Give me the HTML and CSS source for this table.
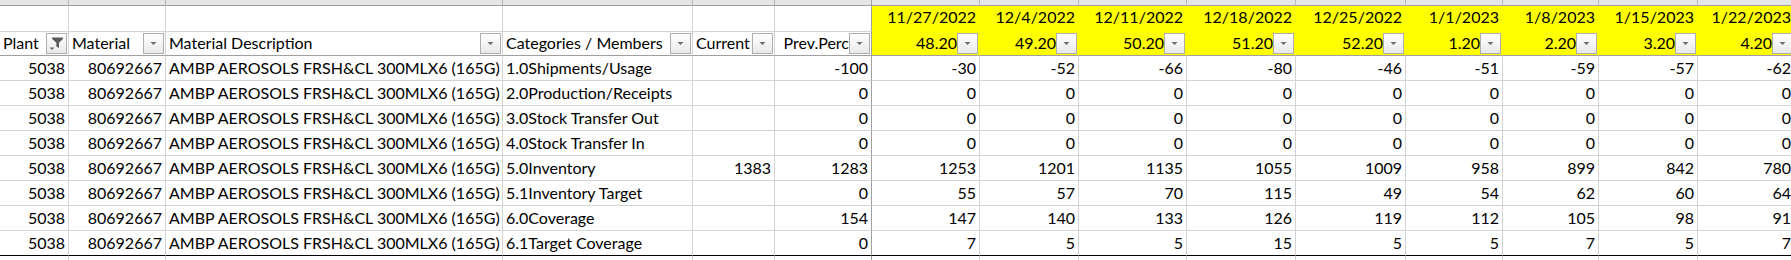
FILE: index.html
```html
<!DOCTYPE html>
<html>
<head>
<meta charset="utf-8">
<link rel="stylesheet" href="styles.css">
</head>
<body>
<div class="sheet" id="sheet"></div>
<script src="app.js"></script>
</body>
</html>
```
FILE: styles.css
```css
* { box-sizing: border-box; }
html, body { margin: 0; padding: 0; background: #fff; overflow: hidden; height: 260px; }
.sheet {
  display: grid;
  grid-template-columns: 69px 97px 337px 190px 82px 97px 108px 99px 108px 109px 110px 97px 96px 99px 97px;
  grid-template-rows: 6px 26px 24px repeat(8, 25px) 4px;
  width: 1795px;
  font-family: Lato, "Open Sans", sans-serif;
  font-size: 16px;
  color: #000;
}
.c {
  border-right: 1px solid #d4d4d4;
  border-bottom: 1px solid #d4d4d4;
  display: flex;
  align-items: flex-end;
  overflow: hidden;
  white-space: nowrap;
  line-height: 1;
  min-width: 0;
}
.strip { background: #e6e6e6; border-bottom-color: #a0a0a0; border-right-color: #b8b8b8; }
.tail { border-bottom: 0; }
.r2 { padding-bottom: 6px; }
.d { padding-bottom: 4px; }
.txt { justify-content: flex-start; padding-left: 3px; }
.num { justify-content: flex-end; padding-right: 3px; }
.r3 { border-bottom-color: #a0a0a0; padding-right: 1px; overflow: visible; }
.fz { border-right-color: #a0a0a0; }
.y { background: #ffff00; border-right-color: #ffff00; }
.r2.y { border-bottom-color: #ffff00; justify-content: flex-end; padding-right: 3px; }
.last { border-bottom-color: #000; }
.label {
  flex: 1 1 auto;
  min-width: 0;
  overflow: hidden;
  line-height: 1.15;
  padding-bottom: 3px;
}
.label.right { text-align: right; }
.label.left { padding-left: 3px; }
.btn {
  flex: 0 0 21px;
  width: 21px;
  height: 21px;
  border: 1px solid #aeaeae;
  background: linear-gradient(to bottom, #ffffff, #e9e9e9);
  display: flex;
  align-items: center;
  justify-content: center;
  margin-bottom: 1px;
}
.btn svg { display: block; }
```
FILE: app.js
```js
const cols = 15;
const dates = ["11/27/2022","12/4/2022","12/11/2022","12/18/2022","12/25/2022","1/1/2023","1/8/2023","1/15/2023","1/22/2023"];
const weeks = ["48.20","49.20","50.20","51.20","52.20","1.20","2.20","3.20","4.20"];
const cats = ["1.0Shipments/Usage","2.0Production/Receipts","3.0Stock Transfer Out","4.0Stock Transfer In","5.0Inventory","5.1Inventory Target","6.0Coverage","6.1Target Coverage"];
const cur = ["","","","","1383","","",""];
const prev = ["-100","0","0","0","1283","0","154","0"];
const vals = [
  [-30,-52,-66,-80,-46,-51,-59,-57,-62],
  [0,0,0,0,0,0,0,0,0],
  [0,0,0,0,0,0,0,0,0],
  [0,0,0,0,0,0,0,0,0],
  [1253,1201,1135,1055,1009,958,899,842,780],
  [55,57,70,115,49,54,62,60,64],
  [147,140,133,126,119,112,105,98,91],
  [7,5,5,15,5,5,7,5,7]
];
const arrow = '<svg width="9" height="5" viewBox="0 0 9 5"><polygon points="1.5,1 7.5,1 4.5,4" fill="#6d6d6d"/></svg>';
const filter = '<svg width="19" height="19" viewBox="0 0 19 19"><path d="M5 3.5h11v1.3l-4 4v5.2l-2.6 -1.5v-3.7l-4.4-4z" fill="#5a5a5a"/><polygon points="2.5,13.5 7.5,13.5 5,16" fill="#6d6d6d"/></svg>';
const sheet = document.getElementById('sheet');
function cell(cls, html) {
  const d = document.createElement('div');
  d.className = 'c ' + cls;
  if (html) d.innerHTML = html;
  sheet.appendChild(d);
}
function fz(i) { return i === 5 ? ' fz' : ''; }
for (let i = 0; i < cols; i++) cell('strip' + fz(i));
for (let i = 0; i < cols; i++) {
  if (i >= 6) cell('r2 y', '<span>' + dates[i-6] + '</span>');
  else cell('r2' + fz(i));
}
const heads = ["Plant","Material","Material Description","Categories / Members","Current","Prev.Perc"];
for (let i = 0; i < cols; i++) {
  if (i < 6) {
    const b = i === 0 ? filter : arrow;
    const align = i === 5 ? 'right' : 'left';
    cell('r3' + fz(i), '<span class="label ' + align + '">' + heads[i] + '</span><span class="btn">' + b + '</span>');
  } else {
    cell('r3 y', '<span class="label right">' + weeks[i-6] + '</span><span class="btn">' + arrow + '</span>');
  }
}
for (let r = 0; r < 8; r++) {
  const last = r === 7 ? ' last' : '';
  cell('d num' + last, '5038');
  cell('d num' + last, '80692667');
  cell('d txt' + last, 'AMBP AEROSOLS FRSH&amp;CL 300MLX6 (165G)');
  cell('d txt' + last, cats[r]);
  cell('d num' + last, cur[r]);
  cell('d num fz' + last, prev[r]);
  for (let k = 0; k < 9; k++) cell('d num' + last, String(vals[r][k]));
}
for (let i = 0; i < cols; i++) cell('tail' + fz(i));
```
